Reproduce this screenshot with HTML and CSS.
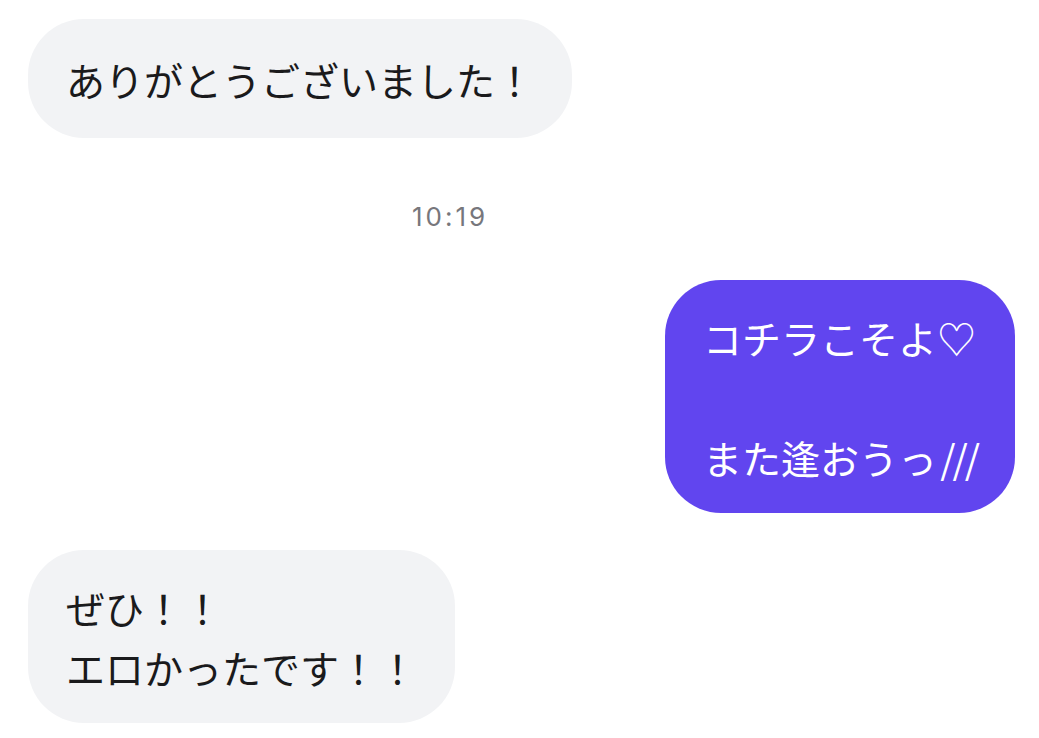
FILE: index.html
```html
<!DOCTYPE html>
<html lang="ja">
<head>
<meta charset="utf-8">
<title>Chat</title>
<link rel="stylesheet" href="styles.css">
</head>
<body>
<div class="chat">
  <div class="row row-in">
    <div class="bubble bubble-in bubble-single">ありがとうございました！</div>
  </div>
  <div class="time">10:19</div>
  <div class="row row-out">
    <div class="bubble bubble-out">コチラこそよ♡<br><br>また逢おうっ<span class="slashes">///</span></div>
  </div>
  <div class="row row-in row-last">
    <div class="bubble bubble-in">ぜひ！！<br>エロかったです！！</div>
  </div>
</div>
</body>
</html>
```
FILE: styles.css
```css
html, body {
  margin: 0;
  padding: 0;
  background: #ffffff;
}
body {
  font-family: "Noto Sans CJK JP", "Noto Sans", sans-serif;
  overflow: hidden;
  height: 738px;
}
.chat {
  display: flex;
  flex-direction: column;
  padding: 19px 24px 0 28px;
}
.row {
  display: flex;
}
.row-in {
  justify-content: flex-start;
}
.row-out {
  justify-content: flex-end;
  margin-top: 48px;
}
.row-last {
  margin-top: 37px;
}
.bubble {
  font-size: 39px;
  line-height: 60px;
  padding: 26.5px 38px;
  border-radius: 56px;
  white-space: nowrap;
}
.bubble-single {
  padding-top: 29.5px;
  padding-bottom: 29.5px;
}
.bubble-in {
  background: #f2f3f5;
  color: #1a1a1c;
}
.bubble-out {
  background: #6145ef;
  color: #ffffff;
}
.slashes {
  letter-spacing: -3px;
  margin-left: 3px;
}
.time {
  margin-top: 64px;
  font-family: Inter, "Liberation Sans", sans-serif;
  font-size: 26px;
  line-height: 30px;
  letter-spacing: 3px;
  color: #77777c;
  padding-left: 384px;
}
```
